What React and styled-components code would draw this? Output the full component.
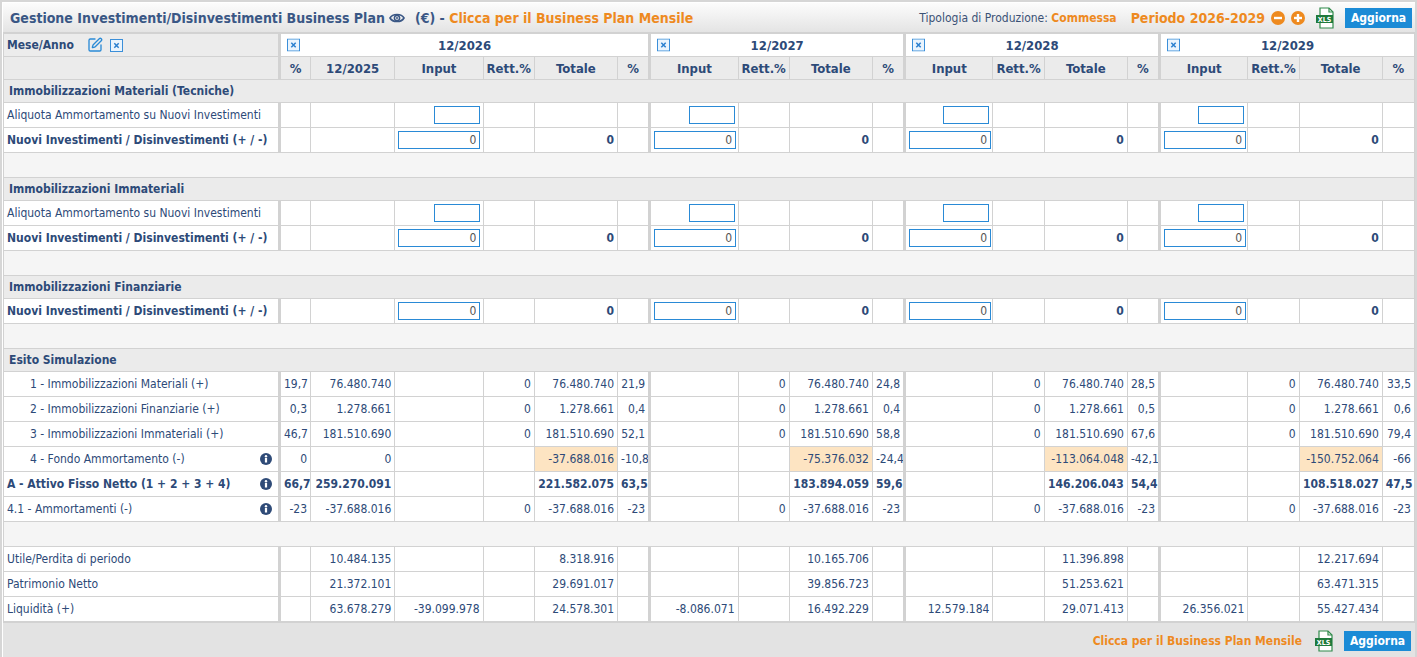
import styled, { createGlobalStyle } from 'styled-components';
import { SquarePen } from 'lucide-react';

const BLUE_TEXT = '#2d4a78';
const ORANGE = '#ee8a1f';
const LINE = '#d2d2d2';

const GlobalStyle = createGlobalStyle`
  html, body { margin: 0; padding: 0; background: #fff; }
  body {
    font-family: "DejaVu Sans Condensed", "DejaVu Sans", "Liberation Sans", sans-serif;
    font-stretch: condensed;
    color: ${BLUE_TEXT};
  }
`;

const Frame = styled.div`
  width: 1417px;
  box-sizing: border-box;
  border: 2px solid #d6d6d6;
  border-bottom: none;
  padding: 1px 0 0 1px;
`;

const TitleBar = styled.div`
  height: 29px;
  display: flex;
  align-items: center;
  justify-content: space-between;
  padding: 0 3px 0 7px;
  background: linear-gradient(#fcfcfc, #e4e4e4);
  border-bottom: 1px solid ${LINE};
`;

const Title = styled.div`
  display: flex;
  align-items: center;
  gap: 4px;
  font-weight: bold;
  font-size: 14px;
  color: #3a5785;
`;

const Orange = styled.span`
  color: ${ORANGE};
  font-weight: bold;
  font-size: ${p => p.$size || 'inherit'};
`;

const Tools = styled.div`
  display: flex;
  align-items: center;
  gap: 6px;
  font-size: 12px;
`;

const Muted = styled.span`
  color: #3b5276;
`;

const Button = styled.button`
  background: #1b8bd6;
  color: #fff;
  border: none;
  font-family: inherit;
  font-stretch: condensed;
  font-weight: bold;
  font-size: 12px;
  height: 20px;
  width: 67px;
  padding: 0;
  margin-left: 4px;
`;

const Table = styled.table`
  width: 100%;
  table-layout: fixed;
  border-collapse: collapse;
  font-size: 12px;
`;

const Cell = styled.td`
  height: 25px;
  padding: 0 3px;
  box-sizing: border-box;
  border: 1px solid ${LINE};
  border-left: ${p => (p.$group ? `3px solid ${LINE}` : `1px solid ${LINE}`)};
  text-align: ${p => p.$align || 'right'};
  font-weight: ${p => (p.$bold ? 'bold' : 'normal')};
  background: ${p => p.$bg || '#fff'};
  white-space: nowrap;
  overflow: hidden;
`;

const HeadCell = styled(Cell).attrs({ as: 'th' })`
  height: 23px;
  font-weight: bold;
  text-align: center;
  font-size: 13px;
`;

const Label = styled(Cell)`
  text-align: left;
  padding-left: ${p => (p.$indent ? '26px' : '3px')};
  border-right: 3px solid ${LINE};
`;

const LabelInner = styled.div`
  display: flex;
  align-items: center;
  justify-content: space-between;
  padding-right: 3px;
`;

const Section = styled.td`
  height: 23px;
  box-sizing: border-box;
  padding: 0 5px;
  border: 1px solid ${LINE};
  background: #ebebeb;
  font-weight: bold;
  text-align: left;
`;

const Spacer = styled.td`
  height: 25px;
  box-sizing: border-box;
  border: 1px solid ${LINE};
  background: #f5f5f5;
`;

const Field = styled.input`
  display: block;
  margin-left: auto;
  box-sizing: border-box;
  width: ${p => (p.$wide ? '82px' : '46px')};
  height: 18px;
  border: 1px solid #2a8ad6;
  background: #fff;
  text-align: right;
  font-family: "DejaVu Sans Condensed", "DejaVu Sans", sans-serif;
  font-size: 12px;
  color: #555;
  padding: 0 3px;
  outline: none;
`;

const GroupHead = styled.div`
  position: relative;
  text-align: center;
`;

const XCorner = styled.span`
  position: absolute;
  left: 3px;
  top: 50%;
  transform: translateY(-50%);
  display: flex;
`;

const Footer = styled.div`
  display: flex;
  justify-content: flex-end;
  align-items: center;
  gap: 6px;
  height: 36px;
  padding-right: 4px;
  background: #e3e3e3;
  border-top: 1px solid ${LINE};
  font-size: 12px;
`;

const HeadLabel = styled.div`
  display: flex;
  align-items: center;
  gap: 7px;
`;

/* icone */

const XBox = () => (
  <svg width="13" height="13" viewBox="0 0 13 13">
    <rect x="0.5" y="0.5" width="12" height="12" fill="#eaf4fd" stroke="#3b8fd9" />
    <path d="M4.3 4.3 L8.7 8.7 M8.7 4.3 L4.3 8.7" stroke="#2a7fcf" strokeWidth="1.5" />
  </svg>
);

const Eye = () => (
  <svg width="16" height="12" viewBox="0 0 16 12">
    <path d="M1 6 C3.5 1.3 12.5 1.3 15 6 C12.5 10.7 3.5 10.7 1 6 Z" fill="none" stroke="#3a5785" strokeWidth="1.6" />
    <circle cx="8" cy="6" r="2.6" fill="none" stroke="#3a5785" strokeWidth="1.5" />
    <circle cx="8" cy="6" r="1" fill="#3a5785" />
  </svg>
);

const RoundBtn = ({ plus }) => (
  <svg width="14" height="14" viewBox="0 0 14 14">
    <circle cx="7" cy="7" r="7" fill={ORANGE} />
    <rect x="3" y="5.8" width="8" height="2.4" fill="#fff" />
    {plus && <rect x="5.8" y="3" width="2.4" height="8" fill="#fff" />}
  </svg>
);

const Xls = () => (
  <svg width="20" height="22" viewBox="0 0 20 22">
    <path d="M5 1 H14 L18 5 V21 H5 Z" fill="#fff" stroke="#2f8a4a" strokeWidth="1.2" />
    <path d="M14 1 V5 H18" fill="none" stroke="#2f8a4a" strokeWidth="1.2" />
    <rect x="1" y="8" width="17" height="8" fill="#1f7a3c" />
    <text x="9.5" y="14.6" fontSize="7" fontWeight="bold" fill="#fff" textAnchor="middle" fontFamily="DejaVu Sans, sans-serif">XLS</text>
  </svg>
);

const Info = () => (
  <svg width="12" height="12" viewBox="0 0 12 12">
    <circle cx="6" cy="6" r="6" fill="#2f4b78" />
    <circle cx="6" cy="3.2" r="1.2" fill="#fff" />
    <rect x="4.9" y="5" width="2.2" height="4.5" fill="#fff" />
  </svg>
);

/* dati */

const COLS = [275, 31, 84, 88, 51, 83, 32, 88, 51, 83, 32, 88, 51, 83, 32, 88, 51, 83, 32];
const GROUP_START = [0, 6, 10, 14];
const INPUT_IDX = [2, 6, 10, 14];
const TOT_IDX = [4, 8, 12, 16];
const YEARS = ['12/2026', '12/2027', '12/2028', '12/2029'];
const SUB_FIRST = ['%', '12/2025', 'Input', 'Rett.%', 'Totale', '%'];
const SUB = ['Input', 'Rett.%', 'Totale', '%'];

const repeat = (g1, g) => [...g1, ...g, ...g, ...g];

const esito = [
  { label: '1 - Immobilizzazioni Materiali (+)', indent: true, cells: ['19,7', '76.480.740', '', '0', '76.480.740', '21,9', '', '0', '76.480.740', '24,8', '', '0', '76.480.740', '28,5', '', '0', '76.480.740', '33,5'] },
  { label: '2 - Immobilizzazioni Finanziarie (+)', indent: true, cells: ['0,3', '1.278.661', '', '0', '1.278.661', '0,4', '', '0', '1.278.661', '0,4', '', '0', '1.278.661', '0,5', '', '0', '1.278.661', '0,6'] },
  { label: '3 - Immobilizzazioni Immateriali (+)', indent: true, cells: ['46,7', '181.510.690', '', '0', '181.510.690', '52,1', '', '0', '181.510.690', '58,8', '', '0', '181.510.690', '67,6', '', '0', '181.510.690', '79,4'] },
  { label: '4 - Fondo Ammortamento (-)', indent: true, info: true, hl: true, cells: ['0', '0', '', '', '-37.688.016', '-10,8', '', '', '-75.376.032', '-24,4', '', '', '-113.064.048', '-42,1', '', '', '-150.752.064', '-66'] },
  { label: 'A - Attivo Fisso Netto (1 + 2 + 3 + 4)', bold: true, info: true, cells: ['66,7', '259.270.091', '', '', '221.582.075', '63,5', '', '', '183.894.059', '59,6', '', '', '146.206.043', '54,4', '', '', '108.518.027', '47,5'] },
  { label: '4.1 - Ammortamenti (-)', info: true, cells: repeat(['-23', '-37.688.016', '', '0', '-37.688.016', '-23'], ['', '0', '-37.688.016', '-23']) },
];

const finali = [
  { label: 'Utile/Perdita di periodo', cells: ['', '10.484.135', '', '', '8.318.916', '', '', '', '10.165.706', '', '', '', '11.396.898', '', '', '', '12.217.694', ''] },
  { label: 'Patrimonio Netto', cells: ['', '21.372.101', '', '', '29.691.017', '', '', '', '39.856.723', '', '', '', '51.253.621', '', '', '', '63.471.315', ''] },
  { label: 'Liquidità (+)', cells: ['', '63.678.279', '-39.099.978', '', '24.578.301', '', '-8.086.071', '', '16.492.229', '', '12.579.184', '', '29.071.413', '', '26.356.021', '', '55.427.434', ''] },
];

const blank = Array(18).fill('');

const DataRow = ({ row }) => (
  <tr>
    <Label $indent={row.indent} $bold={row.bold}>
      <LabelInner>
        <span>{row.label}</span>
        {row.info && <Info />}
      </LabelInner>
    </Label>
    {row.cells.map((v, i) => (
      <Cell
        key={i}
        $group={GROUP_START.includes(i)}
        $bold={row.bold}
        $bg={row.hl && TOT_IDX.includes(i) ? '#fde4c2' : undefined}
      >
        {v}
      </Cell>
    ))}
  </tr>
);

const InputRow = ({ label, wide }) => (
  <tr>
    <Label $bold={wide}>{label}</Label>
    {blank.map((_, i) => (
      <Cell key={i} $group={GROUP_START.includes(i)} $bold={wide}>
        {INPUT_IDX.includes(i) && <Field $wide={wide} defaultValue={wide ? '0' : ''} />}
        {wide && TOT_IDX.includes(i) && '0'}
      </Cell>
    ))}
  </tr>
);

const SectionRow = ({ children }) => (
  <tr>
    <Section colSpan={19}>{children}</Section>
  </tr>
);

const SpacerRow = () => (
  <tr>
    <Spacer colSpan={19} />
  </tr>
);

const App = () => {
  return (
    <Frame>
      <GlobalStyle />
      <TitleBar>
        <Title>
          <span>Gestione Investimenti/Disinvestimenti Business Plan</span>
          <Eye />
          <span style={{ marginLeft: 6 }}>(€) - <Orange>Clicca per il Business Plan Mensile</Orange></span>
        </Title>
        <Tools>
          <Muted>Tipologia di Produzione: <Orange>Commessa</Orange></Muted>
          <Orange $size="14px" style={{ marginLeft: 8 }}>Periodo 2026-2029</Orange>
          <RoundBtn />
          <RoundBtn plus />
          <span style={{ marginLeft: 4, display: 'flex' }}><Xls /></span>
          <Button>Aggiorna</Button>
        </Tools>
      </TitleBar>

      <Table>
        <colgroup>
          {COLS.map((w, i) => <col key={i} style={{ width: w }} />)}
        </colgroup>
        <thead>
          <tr>
            <Label as="th" $bg="#ececec" $bold style={{ height: 23 }}>
              <HeadLabel>
                <span>Mese/Anno</span>
                <span style={{ marginLeft: 6, display: 'flex' }}>
                  <SquarePen size={16} color="#2a8ad6" strokeWidth={2} />
                </span>
                <XBox />
              </HeadLabel>
            </Label>
            {YEARS.map((y, i) => (
              <HeadCell key={y} colSpan={i === 0 ? 6 : 4} $group>
                <GroupHead>
                  <XCorner><XBox /></XCorner>
                  {y}
                </GroupHead>
              </HeadCell>
            ))}
          </tr>
          <tr>
            <Label as="th" $bg="#ebebeb" style={{ height: 23 }} />
            {[...SUB_FIRST, ...SUB, ...SUB, ...SUB].map((s, i) => (
              <HeadCell key={i} $group={GROUP_START.includes(i)} $bg="#ebebeb">{s}</HeadCell>
            ))}
          </tr>
        </thead>
        <tbody>
          <SectionRow>Immobilizzazioni Materiali (Tecniche)</SectionRow>
          <InputRow label="Aliquota Ammortamento su Nuovi Investimenti" />
          <InputRow label="Nuovi Investimenti / Disinvestimenti (+ / -)" wide />
          <SpacerRow />
          <SectionRow>Immobilizzazioni Immateriali</SectionRow>
          <InputRow label="Aliquota Ammortamento su Nuovi Investimenti" />
          <InputRow label="Nuovi Investimenti / Disinvestimenti (+ / -)" wide />
          <SpacerRow />
          <SectionRow>Immobilizzazioni Finanziarie</SectionRow>
          <InputRow label="Nuovi Investimenti / Disinvestimenti (+ / -)" wide />
          <SpacerRow />
          <SectionRow>Esito Simulazione</SectionRow>
          {esito.map(r => <DataRow key={r.label} row={r} />)}
          <SpacerRow />
          {finali.map(r => <DataRow key={r.label} row={r} />)}
        </tbody>
      </Table>

      <Footer>
        <Orange>Clicca per il Business Plan Mensile</Orange>
        <span style={{ marginLeft: 6, display: 'flex' }}><Xls /></span>
        <Button>Aggiorna</Button>
      </Footer>
    </Frame>
  );
};

export default App;
